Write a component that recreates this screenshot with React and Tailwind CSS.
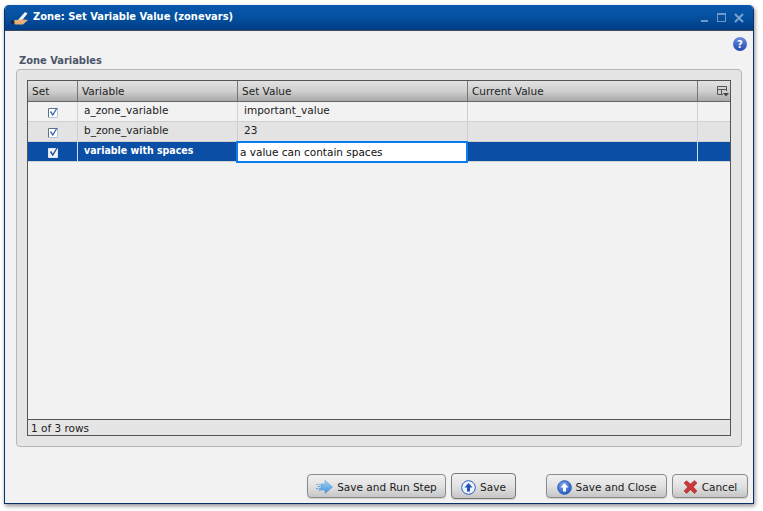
import React from "react";

const rows = [
  { name: "a_zone_variable", value: "important_value", bg: "bg-[#f2f2f2]" },
  { name: "b_zone_variable", value: "23", bg: "bg-[#e3e3e3]" },
];

function CheckBox({ white }) {
  return (
    <svg width="11" height="11" viewBox="0 0 11 11" className="block">
      <rect x="0.5" y="1.5" width="9" height="9" fill={white ? "#eef2f8" : "#ffffff"} />
      <path d="M0.5 10.5 V1.5 H9.5" fill="none" stroke={white ? "#dfe6f0" : "#5f7088"} />
      <path d="M9.5 1.5 V10.5 H0.5" fill="none" stroke={white ? "#dfe6f0" : "#b9c4d4"} />
      <path d="M2.5 4.5 L4.8 8 L9 1" fill="none" stroke={white ? "#1c4f9c" : "#3d6cb5"} strokeWidth="1.4" />
    </svg>
  );
}

function HeaderCell({ className, children }) {
  return (
    <div className={`flex items-center border-r border-[#777] pl-[4px] pt-[1px] ${className}`}>{children}</div>
  );
}

function UpIcon({ solid }) {
  return (
    <svg width="15" height="15" viewBox="0 0 15 15" className="block shrink-0">
      <defs>
        <radialGradient id="upBlue" cx="0.4" cy="0.3" r="0.8">
          <stop offset="0" stopColor="#7da6ec" />
          <stop offset="1" stopColor="#1f50b8" />
        </radialGradient>
      </defs>
      <circle cx="7.5" cy="7.5" r="6.8" fill={solid ? "url(#upBlue)" : "#eef3fb"} stroke="#2a5cc0" strokeWidth="1" />
      <path d="M7.5 3 L11.5 7.5 H9 V11.5 H6 V7.5 H3.5 Z" fill={solid ? "#ffffff" : "#1f56b5"} />
    </svg>
  );
}

function RunIcon() {
  return (
    <svg width="17" height="14" viewBox="0 0 17 14" className="block shrink-0">
      <defs>
        <linearGradient id="runBlue" x1="0" y1="0" x2="0" y2="1">
          <stop offset="0" stopColor="#a5d4f7" />
          <stop offset="1" stopColor="#3d8fd8" />
        </linearGradient>
      </defs>
      <path d="M5 4 H9 V0.5 L16.5 7 L9 13.5 V10 H5 Z" fill="url(#runBlue)" stroke="#4a95d8" strokeWidth="0.5" />
      <path d="M0.5 4.5h1.5M3 4.5h1.5M1.5 6.5h3M0 8.5h2M3 8.5h2M2 10h3" stroke="#5aa3e0" strokeWidth="1.1" />
    </svg>
  );
}

function CancelIcon() {
  return (
    <svg width="15" height="14" viewBox="0 0 15 14" className="block shrink-0">
      <path d="M1 3 L3.5 0.8 L7.5 4 L11.5 0.6 L14 3 L10.3 7 L14 11 L11.5 13.4 L7.5 9.8 L3.5 13.4 L1 11 L4.7 7 Z" fill="#c8393a" stroke="#a92a2c" strokeWidth="0.6" />
    </svg>
  );
}

function Btn({ icon, label, className }) {
  return (
    <button className={`flex shrink-0 items-center justify-center gap-[4px] rounded-[4px] border border-[#8b8b8b] bg-gradient-to-b from-[#f0f0f0] via-[#e2e2e2] to-[#c6c6c6] pt-[2px] text-[#1c1c1c] shadow-[0_1px_1px_rgba(0,0,0,0.15)] ${className}`}>
      {icon}
      <span className="pt-[2px]">{label}</span>
    </button>
  );
}

export default function App() {
  return (
    <div className="h-[511px] w-[763px] overflow-hidden bg-white pl-[4px] pt-[5px] font-['DejaVu_Sans',sans-serif] text-[10.5px] text-[#222]">
      <div className="flex h-[499px] w-[750px] flex-col overflow-hidden rounded-t-[5px] border-x border-b border-[#0b2f6b] bg-[#f2f2f2] shadow-[1px_2px_4px_rgba(0,0,0,0.45)]">
        {/* title bar */}
        <div className="flex h-[26px] shrink-0 items-center border-b border-[#3f4a5c] bg-gradient-to-b from-[#0a56ad] via-[#04509f] to-[#023c86] pl-[6px] pr-[9px]">
          <svg width="18" height="16" viewBox="0 0 18 16" className="block shrink-0">
            <path d="M7 10 L14 2 L16.5 3.5 L10.5 11 Z" fill="#f4f4f4" />
            <path d="M3 10 H6 L9 9.5 H13 L17 10 L12 14.5 H5 L3 14 Z" fill="#e8b078" />
            <path d="M0 10.5 H3.5 V14 H0 Z" fill="#1d2b4a" />
          </svg>
          <span className="ml-[4px] font-['DejaVu_Sans_Condensed','DejaVu_Sans',sans-serif] text-[11px] font-bold text-white">Zone: Set Variable Value (zonevars)</span>
          <div className="ml-auto flex items-center gap-[8px]">
            <div className="mt-[7px] mr-[1px] h-[2px] w-[7px] bg-[#6f97c7]" />
            <div className="h-[9px] w-[9px] border border-t-[2px] border-[#6f97c7]" />
            <svg width="10" height="10" viewBox="0 0 10 10" className="block">
              <path d="M1 1 L9 9 M9 1 L1 9" stroke="#7ba1cd" strokeWidth="2" />
            </svg>
          </div>
        </div>

        <div className="flex min-h-0 flex-1 flex-col px-[11px]">
          <div className="flex h-[13px] justify-end pt-[6px]">
            <div className="mr-[-5px] flex h-[14px] w-[14px] shrink-0 items-center justify-center rounded-full bg-gradient-to-b from-[#6d8fe0] to-[#2147b0] text-[10px] font-bold text-white">?</div>
          </div>
          <div className="mt-[10px] pl-[3px] font-['DejaVu_Sans_Condensed','DejaVu_Sans',sans-serif] text-[11px] font-bold leading-[14px] text-[#4b5468]">Zone Variables</div>

          {/* group box */}
          <div className="mt-[1px] h-[378px] rounded-[4px] border border-[#b6b6b6] bg-[#e5e5e5] p-[10px]">
            <div className="flex h-[356px] flex-col border border-[#555] bg-[#f2f2f2]">
              <div className="flex h-[21px] shrink-0 border-b border-[#666] bg-gradient-to-b from-[#e2e2e2] via-[#d0d0d0] to-[#a9a9a9]">
                <HeaderCell className="w-[50px]">Set</HeaderCell>
                <HeaderCell className="w-[160px]">Variable</HeaderCell>
                <HeaderCell className="w-[230px]">Set Value</HeaderCell>
                <HeaderCell className="w-[230px]">Current Value</HeaderCell>
                <div className="flex flex-1 items-center justify-center">
                  <svg width="12" height="11" viewBox="0 0 12 11" className="ml-[17px] block">
                    <path d="M0.5 8.5 V0.5 H9.5 V5 M0.5 3.5 H9.5 M4.5 3.5 V8.5 M0.5 8.5 H6" fill="none" stroke="#555" />
                    <path d="M6 7 H12 L9 10.5 Z" fill="#444" />
                  </svg>
                </div>
              </div>

              {rows.map((r) => (
                <div key={r.name} className={`flex h-[20px] shrink-0 border-b border-[#d0d0d0] ${r.bg}`}>
                  <div className="flex w-[50px] items-start justify-center border-r border-[#cfcfcf] pl-[2px] pt-[5px]">
                    <CheckBox />
                  </div>
                  <div className="w-[160px] border-r border-[#cfcfcf] pl-[6px] pt-[1px] leading-[14px]">{r.name}</div>
                  <div className="w-[230px] border-r border-[#cfcfcf] pl-[6px] pt-[1px] leading-[14px]">{r.value}</div>
                  <div className="w-[230px] border-r border-[#cfcfcf]" />
                  <div className="flex-1" />
                </div>
              ))}

              {/* selected row, editor sits over the Set Value cell */}
              <div className="flex h-[20px] shrink-0 border-b border-[#d0d0d0] bg-[#0a4ea6] text-white">
                <div className="flex w-[50px] items-start justify-center border-r border-[#cfdcf0] pl-[2px] pt-[5px]">
                  <CheckBox white />
                </div>
                <div className="w-[160px] pl-[6px] pt-[1px] font-['DejaVu_Sans_Condensed','DejaVu_Sans',sans-serif] font-bold leading-[14px]">variable with spaces</div>
                <div className="relative w-[230px] border-r border-[#cfdcf0]">
                  <div className="absolute left-[-2px] top-[-1px] flex h-[22px] w-[232px] items-center border-2 border-[#0a7bf0] bg-white pl-[2px] pt-[2px] text-[#111]">a value can contain spaces</div>
                </div>
                <div className="w-[230px] border-r border-[#cfdcf0]" />
                <div className="flex-1" />
              </div>

              <div className="flex-1" />
              <div className="flex h-[16px] shrink-0 items-center border-t border-[#555] bg-[#e5e5e5] pl-[3px] pt-[2px]">1 of 3 rows</div>
            </div>
          </div>

          {/* buttons */}
          <div className="mt-[26px] flex items-center">
            <Btn className="ml-[291px] h-[24px] w-[139px]" icon={<RunIcon />} label="Save and Run Step" />
            <Btn className="ml-[5px] h-[26px] w-[65px] border-[#777]" icon={<UpIcon />} label="Save" />
            <Btn className="ml-[30px] h-[24px] w-[121px]" icon={<UpIcon solid />} label="Save and Close" />
            <Btn className="ml-[5px] h-[24px] w-[76px]" icon={<CancelIcon />} label="Cancel" />
          </div>
        </div>
      </div>
    </div>
  );
}
